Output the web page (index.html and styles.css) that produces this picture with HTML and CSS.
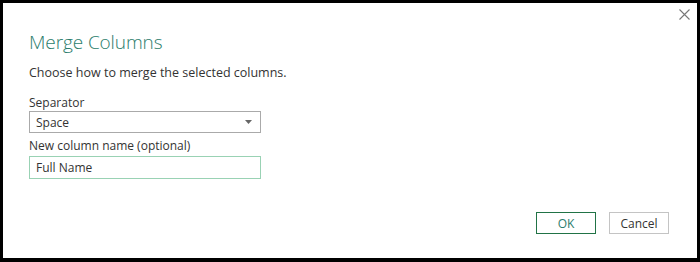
FILE: index.html
```html
<!DOCTYPE html>
<html lang="en">
<head>
  <meta charset="UTF-8">
  <title>Merge Columns</title>
  <link rel="stylesheet" href="styles.css">
</head>
<body>
  <div class="dialog">
    <button class="close" aria-label="Close">
      <svg width="11" height="11" viewBox="0 0 11 11"><path d="M0.5 0.5L10.5 10.5M10.5 0.5L0.5 10.5" stroke="#777" stroke-width="1.1" fill="none"/></svg>
    </button>
    <h1>Merge Columns</h1>
    <p class="intro">Choose how to merge the selected columns.</p>

    <label class="lbl">Separator</label>
    <div class="select">
      <span>Space</span>
      <svg width="7" height="4" viewBox="0 0 7 4"><path d="M0 0H7L3.5 4Z" fill="#666"/></svg>
    </div>

    <label class="lbl">New column name (optional)</label>
    <div class="field">Full Name</div>

    <div class="actions">
      <button class="btn ok">OK</button>
      <button class="btn">Cancel</button>
    </div>
  </div>
</body>
</html>
```

FILE: styles.css
```css
*{box-sizing:border-box;}
html,body{margin:0;height:100%;background:#000;}
body{padding:3px 3px 4px 3px;font-family:"Open Sans","Noto Sans",sans-serif;color:#333;}
.dialog{position:relative;background:#fff;height:100%;padding:26px 28px 0 26px;}
.close{position:absolute;top:6px;right:7px;border:0;background:none;padding:0;width:11px;height:11px;}
.close svg{display:block;}
h1{margin:0;font-weight:300;font-size:19px;color:#2b7d6c;line-height:26px;letter-spacing:-0.1px;}
.intro{margin:9px 0 0;font-size:12.5px;line-height:18px;color:#333;}
.lbl{display:block;margin-top:13px;font-size:12px;line-height:16px;color:#333;}
.select,.field{width:232px;height:22px;border:1px solid #aaa;margin-top:0;font-size:12px;padding:0 6px;display:flex;align-items:center;justify-content:space-between;color:#333;}
.select svg{margin-right:2px;}
.field{border-color:#99d2b4;height:23px;margin-top:2px;}
.select + .lbl{margin-top:5px;}
.actions{display:flex;justify-content:flex-end;gap:13px;margin-top:33px;}
.btn{width:60px;height:22px;border:1px solid #c4c4c4;background:#fff;font-family:inherit;font-size:12px;color:#333;padding:0;}
.btn.ok{border-color:#217346;color:#2b7d6c;}
```
